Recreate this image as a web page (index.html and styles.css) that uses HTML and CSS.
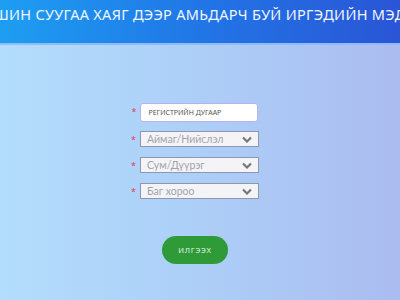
FILE: index.html
```html
<!DOCTYPE html>
<html lang="mn">
<head>
    <meta charset="UTF-8">
    <meta name="viewport" content="width=device-width, initial-scale=1.0">
    <title>Иргэдийн мэдээлэл</title>
    <link rel="stylesheet" href="styles.css">
</head>
<body>
    <header class="top-bar">
        <h1>ОДОО ШИН СУУГАА ХАЯГ ДЭЭР АМЬДАРЧ БУЙ ИРГЭДИЙН МЭДЭЭЛЭЛ</h1>
    </header>

    <main class="page">
        <form class="form">
            <div class="row">
                <span class="req">*</span>
                <input class="text-input" type="text" placeholder="РЕГИСТРИЙН ДУГААР">
            </div>
            <div class="row">
                <span class="req">*</span>
                <div class="select">
                    <span>Аймаг/Нийслэл</span>
                    <svg class="chev" width="10" height="7" viewBox="0 0 10 7"><path d="M1 1.5 L5 5.5 L9 1.5" fill="none" stroke="#777" stroke-width="2.2"/></svg>
                </div>
            </div>
            <div class="row">
                <span class="req">*</span>
                <div class="select">
                    <span>Сум/Дүүрэг</span>
                    <svg class="chev" width="10" height="7" viewBox="0 0 10 7"><path d="M1 1.5 L5 5.5 L9 1.5" fill="none" stroke="#777" stroke-width="2.2"/></svg>
                </div>
            </div>
            <div class="row">
                <span class="req">*</span>
                <div class="select">
                    <span>Баг хороо</span>
                    <svg class="chev" width="10" height="7" viewBox="0 0 10 7"><path d="M1 1.5 L5 5.5 L9 1.5" fill="none" stroke="#777" stroke-width="2.2"/></svg>
                </div>
            </div>

            <button type="button" class="send-btn">ИЛГЭЭХ</button>
        </form>
    </main>
</body>
</html>
```

FILE: styles.css
```css
body {
    margin: 0;
    font-family: "Noto Sans", "Open Sans", sans-serif;
    width: 400px;
    height: 300px;
    overflow: hidden;
    background: linear-gradient(90deg, #b3ddfc 0%, #add0f8 45%, #abbcf0 100%);
}

.top-bar {
    height: 43px;
    display: flex;
    justify-content: center;
    overflow: hidden;
    background: linear-gradient(90deg, #1d9ef2 0%, #2176e6 50%, #2a55d6 100%);
    border-bottom: 2px solid #8fbcf5;
}

.top-bar h1 {
    margin: 0;
    padding-top: 4px;
    flex-shrink: 0;
    white-space: nowrap;
    font-size: 14.5px;
    font-weight: 400;
    color: #f2f6ff;
    letter-spacing: 0.3px;
}

.page {
    display: flex;
    justify-content: center;
    padding-top: 58px;
}

.form {
    display: flex;
    flex-direction: column;
    align-items: center;
    margin-left: -10px;
}

.row {
    display: flex;
    align-items: flex-start;
    gap: 4px;
    margin-bottom: 10px;
}

.req {
    color: #e0405a;
    font-size: 9px;
    line-height: 1;
    margin-top: 4px;
}

.text-input {
    box-sizing: border-box;
    width: 118px;
    height: 19px;
    padding: 0 7px;
    border: 1px solid #b6b2f2;
    border-radius: 3px;
    background: #fff;
    font-family: inherit;
    font-size: 7px;
    color: #555;
}

.text-input::placeholder {
    color: #555;
}

.row:first-child {
    margin-bottom: 9px;
}

.select {
    box-sizing: border-box;
    width: 119px;
    height: 16px;
    display: flex;
    align-items: center;
    justify-content: space-between;
    padding: 0 6px 0 6px;
    border: 1.5px solid #8c98b2;
    background: #f4f4f6;
    font-family: "Lato", sans-serif;
    font-size: 10.5px;
    color: #a3a3ad;
}

.chev {
    display: block;
}

.send-btn {
    margin-top: 27px;
    width: 66px;
    height: 28px;
    border: none;
    border-radius: 14px;
    background: #2e9b38;
    color: #e8f5e9;
    font-family: inherit;
    font-size: 7.5px;
    letter-spacing: 0.8px;
    cursor: pointer;
}
```
